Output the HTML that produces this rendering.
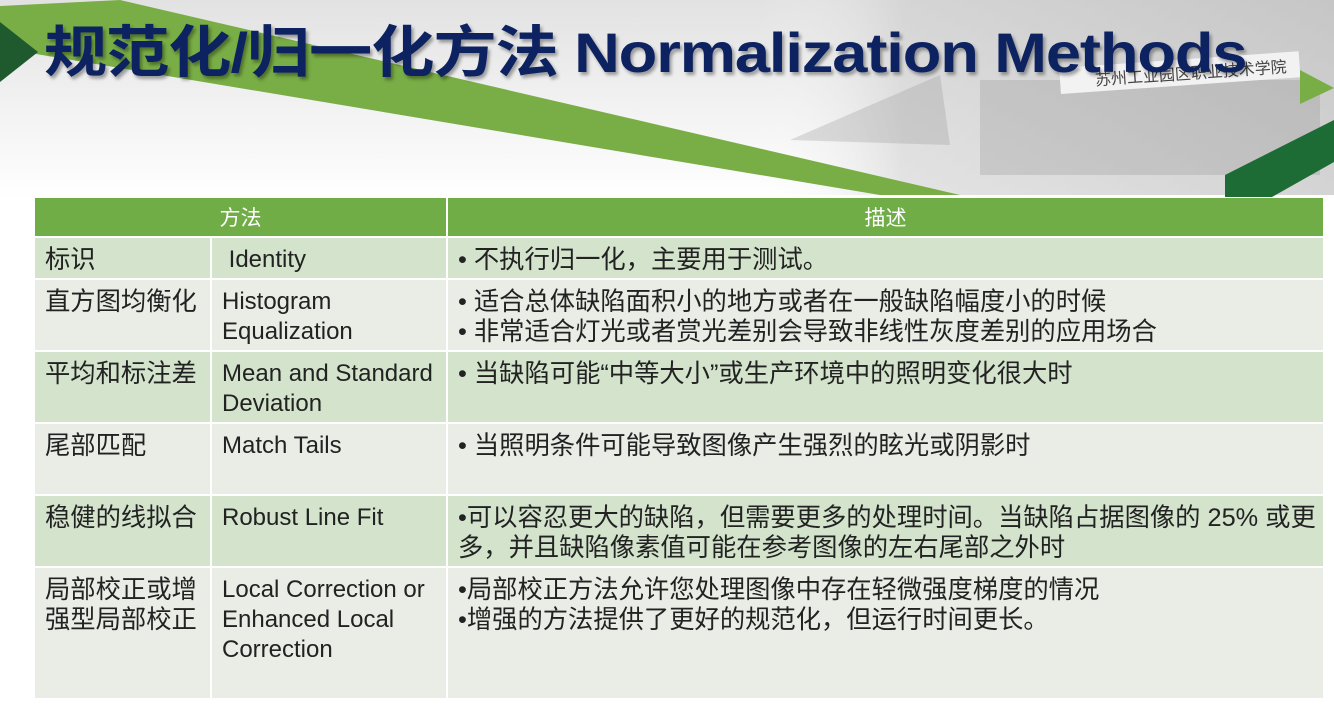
<!DOCTYPE html>
<html><head><meta charset="utf-8"><style>
body{margin:0;width:1334px;height:706px;overflow:hidden;background:#fff;position:relative;font-family:"Liberation Sans","Noto Sans CJK SC",sans-serif}
.bg{position:absolute;left:0;top:0;width:1334px;height:200px;background:linear-gradient(#e2e2e2,#f4f4f4 60%,#fff)}
h1{position:absolute;left:44px;top:8px;margin:0;font-size:56px;font-weight:bold;color:#0d2260;letter-spacing:-1px;white-space:nowrap;text-shadow:2px 3px 3px rgba(0,0,0,.35);transform:scaleX(1.13);transform-origin:0 0}
table{position:absolute;left:33px;top:196px;border-collapse:separate;border-spacing:2px;width:1292px;table-layout:fixed}
td{font-size:24px;color:#222;vertical-align:top;padding:7px 10px 1px;line-height:30px;box-sizing:border-box}
td.c{font-size:25.3px}
th{background:#70ad47;color:#fff;font-weight:normal;font-size:21px;height:38px;padding:0}
tr.a td{background:#d3e3cc}
tr.b td{background:#e9ede6}
</style></head><body>
<div class="bg"></div>
<svg width="1334" height="200" style="position:absolute;left:0;top:0">
<defs><linearGradient id="g" x1="0" x2="1"><stop offset="0" stop-color="#fff" stop-opacity="0"/><stop offset=".25" stop-color="#c8c8c8"/><stop offset="1" stop-color="#aaa"/></linearGradient></defs>
<rect x="760" y="0" width="574" height="195" fill="url(#g)" opacity=".5"/>
<rect x="980" y="80" width="340" height="95" fill="#888" opacity=".25"/>
<polygon points="790,140 940,75 950,145" fill="#999" opacity=".3"/>
<rect x="1060" y="68" width="240" height="26" fill="#f2f2f2" transform="rotate(-4 1060 80)"/>
<text x="1095" y="88" font-size="16" fill="#444" font-family="Noto Sans CJK SC" transform="rotate(-4 1060 80)">苏州工业园区职业技术学院</text>
<polygon points="0,6 120,0 960,195 880,195 0,48" fill="#79ad45"/>
<polygon points="0,22 38,52 0,82" fill="#1e5a2e"/>
<polygon points="1300,70 1334,88 1300,104" fill="#79ad45"/>
<polygon points="1225,175 1334,120 1334,162 1272,197 1225,197" fill="#1d6b35"/>
</svg>
<h1>规范化/归一化方法 Normalization Methods</h1>
<table>
<colgroup><col style="width:175px"><col style="width:234px"><col></colgroup>
<tr><th colspan="2">方法</th><th>描述</th></tr>
<tr class="a" style="height:40px"><td class="c">标识</td><td>&nbsp;Identity</td><td class="c">• 不执行归一化，主要用于测试。</td></tr>
<tr class="b" style="height:70px"><td class="c">直方图均衡化</td><td>Histogram<br>Equalization</td><td class="c">• 适合总体缺陷面积小的地方或者在一般缺陷幅度小的时候<br>• 非常适合灯光或者赏光差别会导致非线性灰度差别的应用场合</td></tr>
<tr class="a" style="height:70px"><td class="c">平均和标注差</td><td>Mean and Standard Deviation</td><td class="c">• 当缺陷可能“中等大小”或生产环境中的照明变化很大时</td></tr>
<tr class="b" style="height:70px"><td class="c">尾部匹配</td><td>Match Tails</td><td class="c">• 当照明条件可能导致图像产生强烈的眩光或阴影时</td></tr>
<tr class="a" style="height:70px"><td class="c">稳健的线拟合</td><td>Robust Line Fit</td><td class="c" style="white-space:nowrap">•可以容忍更大的缺陷，但需要更多的处理时间。当缺陷占据图像的 25% 或更<br>多，并且缺陷像素值可能在参考图像的左右尾部之外时</td></tr>
<tr class="b" style="height:130px"><td class="c">局部校正或增强型局部校正</td><td>Local Correction or Enhanced Local Correction</td><td class="c">•局部校正方法允许您处理图像中存在轻微强度梯度的情况<br>•增强的方法提供了更好的规范化，但运行时间更长。</td></tr>
</table>
</body></html>
